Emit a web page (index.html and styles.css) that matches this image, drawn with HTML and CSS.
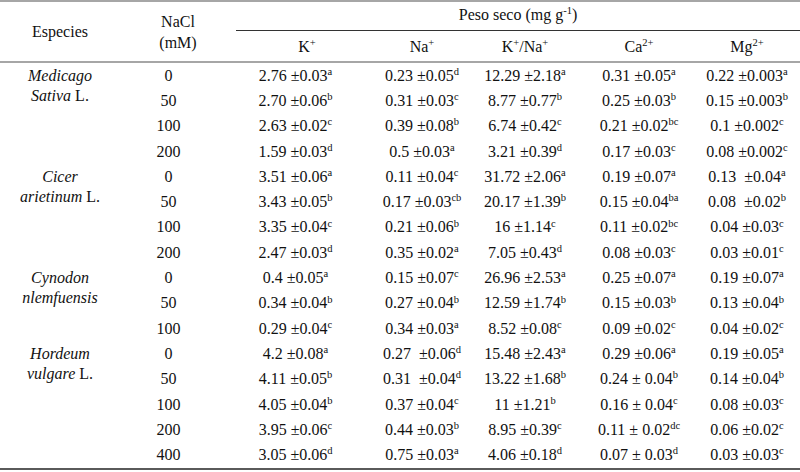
FILE: index.html
```html
<!DOCTYPE html>
<html lang="es">
<head>
<meta charset="utf-8">
<title>Peso seco</title>
<link rel="stylesheet" href="styles.css">
</head>
<body>
<table class="tbl">
  <colgroup>
    <col class="c-sp"><col class="c-na"><col class="c-k"><col class="c-nai"><col class="c-kna"><col class="c-ca"><col class="c-mg">
  </colgroup>
  <thead>
    <tr class="h1">
      <th rowspan="2" class="h-sp">Especies</th>
      <th rowspan="2" class="h-nacl">NaCl<br>(mM)</th>
      <th colspan="5" class="h-peso">Peso seco (mg g<sup>-1</sup>)</th>
    </tr>
    <tr class="h2">
      <th>K<sup>+</sup></th>
      <th>Na<sup>+</sup></th>
      <th>K<sup>+</sup>/Na<sup>+</sup></th>
      <th>Ca<sup>2+</sup></th>
      <th>Mg<sup>2+</sup></th>
    </tr>
  </thead>
  <tbody>
    <tr>
      <td rowspan="4" class="sp"><i>Medicago</i><br><i>Sativa</i> L.</td>
      <td class="n">0</td><td class="k">2.76 ±0.03<sup>a</sup></td><td>0.23 ±0.05<sup>d</sup></td><td>12.29 ±2.18<sup>a</sup></td><td>0.31 ±0.05<sup>a</sup></td><td>0.22 ±0.003<sup>a</sup></td>
    </tr>
    <tr>
      <td class="n">50</td><td class="k">2.70 ±0.06<sup>b</sup></td><td>0.31 ±0.03<sup>c</sup></td><td>8.77 ±0.77<sup>b</sup></td><td>0.25 ±0.03<sup>b</sup></td><td>0.15 ±0.003<sup>b</sup></td>
    </tr>
    <tr>
      <td class="n">100</td><td class="k">2.63 ±0.02<sup>c</sup></td><td>0.39 ±0.08<sup>b</sup></td><td>6.74 ±0.42<sup>c</sup></td><td>0.21 ±0.02<sup>bc</sup></td><td>0.1 ±0.002<sup>c</sup></td>
    </tr>
    <tr>
      <td class="n">200</td><td class="k">1.59 ±0.03<sup>d</sup></td><td>0.5 ±0.03<sup>a</sup></td><td>3.21 ±0.39<sup>d</sup></td><td>0.17 ±0.03<sup>c</sup></td><td>0.08 ±0.002<sup>c</sup></td>
    </tr>
    <tr>
      <td rowspan="4" class="sp"><i>Cicer</i><br><i>arietinum</i> L.</td>
      <td class="n">0</td><td class="k">3.51 ±0.06<sup>a</sup></td><td>0.11 ±0.04<sup>c</sup></td><td>31.72 ±2.06<sup>a</sup></td><td>0.19 ±0.07<sup>a</sup></td><td>0.13&nbsp; ±0.04<sup>a</sup></td>
    </tr>
    <tr>
      <td class="n">50</td><td class="k">3.43 ±0.05<sup>b</sup></td><td>0.17 ±0.03<sup>cb</sup></td><td>20.17 ±1.39<sup>b</sup></td><td>0.15 ±0.04<sup>ba</sup></td><td>0.08&nbsp; ±0.02<sup>b</sup></td>
    </tr>
    <tr>
      <td class="n">100</td><td class="k">3.35 ±0.04<sup>c</sup></td><td>0.21 ±0.06<sup>b</sup></td><td>16 ±1.14<sup>c</sup></td><td>0.11 ±0.02<sup>bc</sup></td><td>0.04 ±0.03<sup>c</sup></td>
    </tr>
    <tr>
      <td class="n">200</td><td class="k">2.47 ±0.03<sup>d</sup></td><td>0.35 ±0.02<sup>a</sup></td><td>7.05 ±0.43<sup>d</sup></td><td>0.08 ±0.03<sup>c</sup></td><td>0.03 ±0.01<sup>c</sup></td>
    </tr>
    <tr>
      <td rowspan="3" class="sp"><i>Cynodon</i><br><i>nlemfuensis</i></td>
      <td class="n">0</td><td class="k">0.4 ±0.05<sup>a</sup></td><td>0.15 ±0.07<sup>c</sup></td><td>26.96 ±2.53<sup>a</sup></td><td>0.25 ±0.07<sup>a</sup></td><td>0.19 ±0.07<sup>a</sup></td>
    </tr>
    <tr>
      <td class="n">50</td><td class="k">0.34 ±0.04<sup>b</sup></td><td>0.27 ±0.04<sup>b</sup></td><td>12.59 ±1.74<sup>b</sup></td><td>0.15 ±0.03<sup>b</sup></td><td>0.13 ±0.04<sup>b</sup></td>
    </tr>
    <tr>
      <td class="n">100</td><td class="k">0.29 ±0.04<sup>c</sup></td><td>0.34 ±0.03<sup>a</sup></td><td>8.52 ±0.08<sup>c</sup></td><td>0.09 ±0.02<sup>c</sup></td><td>0.04 ±0.02<sup>c</sup></td>
    </tr>
    <tr>
      <td rowspan="5" class="sp"><i>Hordeum</i><br><i>vulgare</i> L.</td>
      <td class="n">0</td><td class="k">4.2 ±0.08<sup>a</sup></td><td>0.27&nbsp; ±0.06<sup>d</sup></td><td>15.48 ±2.43<sup>a</sup></td><td>0.29 ±0.06<sup>a</sup></td><td>0.19 ±0.05<sup>a</sup></td>
    </tr>
    <tr>
      <td class="n">50</td><td class="k">4.11 ±0.05<sup>b</sup></td><td>0.31&nbsp; ±0.04<sup>d</sup></td><td>13.22 ±1.68<sup>b</sup></td><td>0.24 ± 0.04<sup>b</sup></td><td>0.14 ±0.04<sup>b</sup></td>
    </tr>
    <tr>
      <td class="n">100</td><td class="k">4.05 ±0.04<sup>b</sup></td><td>0.37 ±0.04<sup>c</sup></td><td>11 ±1.21<sup>b</sup></td><td>0.16 ± 0.04<sup>c</sup></td><td>0.08 ±0.03<sup>c</sup></td>
    </tr>
    <tr>
      <td class="n">200</td><td class="k">3.95 ±0.06<sup>c</sup></td><td>0.44 ±0.03<sup>b</sup></td><td>8.95 ±0.39<sup>c</sup></td><td>0.11 ± 0.02<sup>dc</sup></td><td>0.06 ±0.02<sup>c</sup></td>
    </tr>
    <tr>
      <td class="n">400</td><td class="k">3.05 ±0.06<sup>d</sup></td><td>0.75 ±0.03<sup>a</sup></td><td>4.06 ±0.18<sup>d</sup></td><td>0.07 ± 0.03<sup>d</sup></td><td>0.03 ±0.03<sup>c</sup></td>
    </tr>
  </tbody>
</table>
</body>
</html>
```
FILE: styles.css
```css
html, body {
  margin: 0;
  padding: 0;
  background: #ffffff;
}

body {
  font-family: "Liberation Serif", "Times New Roman", serif;
  font-size: 16px;
  color: #111111;
}

.tbl {
  width: 800px;
  border-collapse: collapse;
  table-layout: fixed;
  border-top: 2px solid #a6a6a6;
  border-bottom: 2px solid #5a5a5a;
}

.c-sp { width: 120px; }
.c-na { width: 116px; }
.c-k { width: 142px; }
.c-nai { width: 88px; }
.c-kna { width: 118px; }
.c-ca { width: 110px; }
.c-mg { width: 106px; }

th {
  font-weight: normal;
  text-align: center;
  padding: 0;
}

thead {
  border-bottom: 2px solid #a6a6a6;
}

.h1 { height: 29px; }
.h2 { height: 32px; }

.h-sp, .h-nacl {
  vertical-align: middle;
  line-height: 21px;
}

.h-peso {
  border-bottom: 1px solid #333333;
  vertical-align: middle;
  padding-bottom: 1px;
  line-height: 20px;
}

.h2 th {
  vertical-align: middle;
  line-height: 20px;
  padding-top: 2px;
}

sup {
  font-size: 10.5px;
  line-height: 0;
  vertical-align: 0;
  position: relative;
  top: -0.55em;
}

td {
  text-align: center;
  padding: 0;
  height: 25.3px;
  line-height: 20px;
  vertical-align: middle;
  white-space: nowrap;
}

td.n {
  padding-right: 19px;
}

td.k {
  padding-right: 23px;
}

td.sp {
  vertical-align: top;
  padding-top: 3px;
  line-height: 20px;
}

td.sp i {
  font-style: italic;
}
```
